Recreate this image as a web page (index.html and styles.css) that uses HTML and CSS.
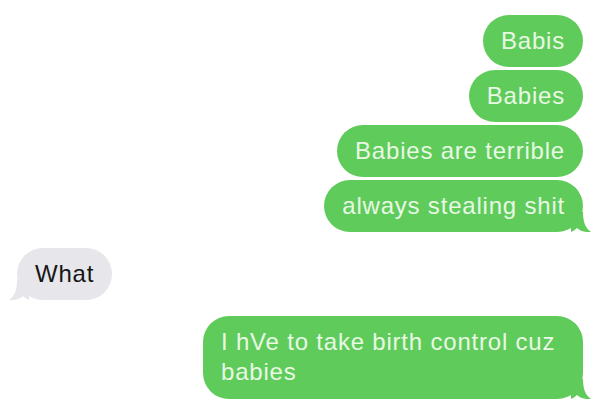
FILE: index.html
```html
<!DOCTYPE html>
<html lang="en">
<head>
    <meta charset="UTF-8">
    <meta name="viewport" content="width=device-width, initial-scale=1.0">
    <title>Messages</title>
    <link rel="stylesheet" href="styles.css">
</head>
<body>
    <div class="thread">
        <div class="group sent">
            <div class="bubble">Babis</div>
            <div class="bubble">Babies</div>
            <div class="bubble">Babies are terrible</div>
            <div class="bubble tail">always stealing shit
                <svg class="tip" width="20" height="20" viewBox="0 0 20 20"><path d="M0 0 H12 C12 9 14 16 20 20 C14 20.5 9 19 6 16 C4 18 2 19 0 20 Z"/></svg>
            </div>
        </div>

        <div class="group received">
            <div class="bubble tail">What
                <svg class="tip" width="20" height="20" viewBox="0 0 20 20"><path d="M20 0 H8 C8 9 6 16 0 20 C6 20.5 11 19 14 16 C16 18 18 19 20 20 Z"/></svg>
            </div>
        </div>

        <div class="group sent">
            <div class="bubble tail wide">I hVe to take birth control cuz<br>babies
                <svg class="tip" width="20" height="20" viewBox="0 0 20 20"><path d="M0 0 H12 C12 9 14 16 20 20 C14 20.5 9 19 6 16 C4 18 2 19 0 20 Z"/></svg>
            </div>
        </div>
    </div>
</body>
</html>
```

FILE: styles.css
```css
body {
    margin: 0;
    padding: 0;
    background-color: #ffffff;
    font-family: 'Liberation Sans', Arial, sans-serif;
}

.thread {
    display: flex;
    flex-direction: column;
    gap: 16px;
    padding: 15px 17px 0 17px;
}

.group {
    display: flex;
    flex-direction: column;
    gap: 3px;
}

.sent {
    align-items: flex-end;
}

.received {
    align-items: flex-start;
}

.bubble {
    position: relative;
    padding: 11px 18px;
    border-radius: 26px;
    font-size: 24px;
    line-height: 30px;
    letter-spacing: 0.8px;
}

.sent .bubble {
    background-color: #5fcb5b;
    color: #e8f8e4;
}

.received .bubble {
    background-color: #e6e6eb;
    color: #161616;
}

.wide {
    width: 344px;
    padding-top: 11px;
    padding-bottom: 12px;
}

.tip {
    position: absolute;
    bottom: 0;
}

.sent .tip {
    right: -8px;
    fill: #5fcb5b;
}

.received .tip {
    left: -8px;
    fill: #e6e6eb;
}
```
